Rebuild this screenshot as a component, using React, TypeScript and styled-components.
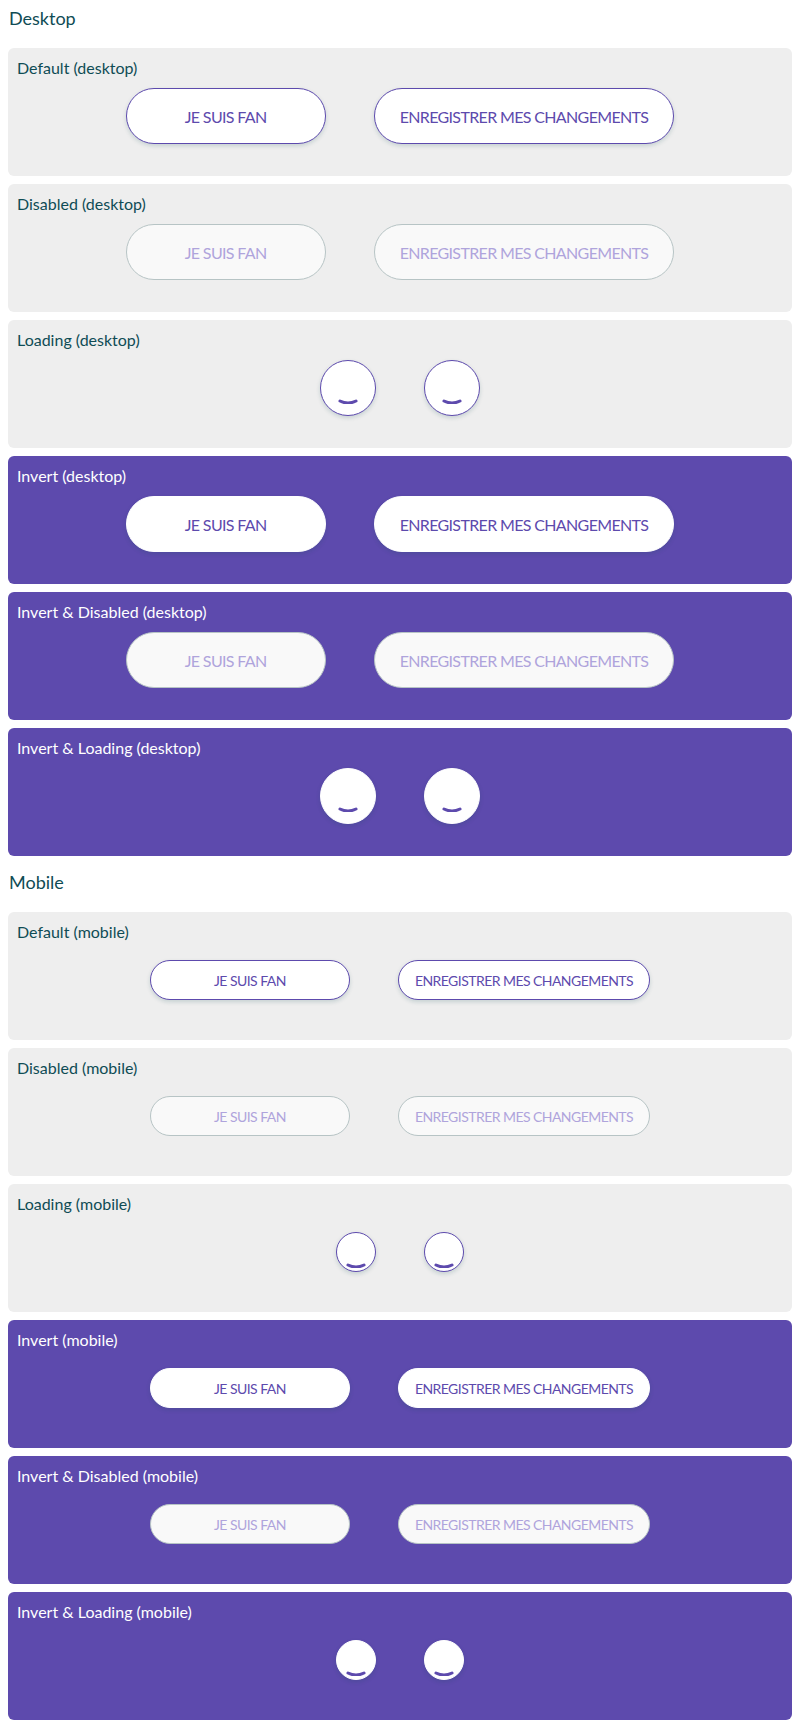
import * as React from "react";
import styled, { createGlobalStyle, css } from "styled-components";

const PURPLE = "#5d4aad";
const INK = "#0f4c55";

const GlobalStyle = createGlobalStyle`
  html, body {
    margin: 0;
    padding: 0;
    background: #ffffff;
  }
  body {
    font-family: Lato, "Noto Sans", "DejaVu Sans", sans-serif;
    -webkit-font-smoothing: antialiased;
  }
`;

type Size = "desktop" | "mobile";
type State = "default" | "disabled" | "loading";

const Page = styled.div`
  display: flex;
  flex-direction: column;
  gap: 8px;
  padding: 0 8px 8px;
`;

const SectionTitle = styled.h2`
  margin: 0;
  height: 40px;
  padding: 4px 1px 0;
  box-sizing: border-box;
  font-size: 18px;
  font-weight: 400;
  line-height: 28px;
  color: ${INK};
`;

const Card = styled.section<{ $invert: boolean }>`
  display: flex;
  flex-direction: column;
  height: 128px;
  box-sizing: border-box;
  padding: 8px 9px;
  border-radius: 6px;
  background: ${(p) => (p.$invert ? PURPLE : "#eeeeee")};
`;

const CardTitle = styled.div<{ $invert: boolean }>`
  font-size: 16px;
  line-height: 24px;
  color: ${(p) => (p.$invert ? "#ffffff" : INK)};
`;

const Row = styled.div`
  display: flex;
  align-items: center;
  justify-content: center;
  gap: 48px;
  height: 72px;
`;

const Button = styled.button<{ $size: Size; $invert: boolean; $round?: boolean }>`
  display: inline-flex;
  align-items: center;
  justify-content: center;
  box-sizing: border-box;
  margin: 0;
  font-family: inherit;
  font-weight: 400;
  text-transform: uppercase;
  white-space: nowrap;
  border-radius: 999px;
  cursor: pointer;
  background: #ffffff;
  color: ${PURPLE};
  border: 1px solid ${(p) => (p.$invert ? "#ffffff" : PURPLE)};
  box-shadow: 0 2px 4px rgba(15, 76, 85, 0.18);

  ${(p) =>
    p.$size === "desktop"
      ? css`
          height: 56px;
          min-width: 200px;
          padding: 0 25px;
          font-size: 16px;
          letter-spacing: -0.65px;
        `
      : css`
          height: 40px;
          min-width: 200px;
          padding: 0 16px;
          font-size: 14px;
          letter-spacing: -0.55px;
        `}

  ${(p) =>
    p.$round &&
    css`
      width: ${p.$size === "desktop" ? "56px" : "40px"};
      min-width: 0;
      padding: 0;
    `}

  &:disabled {
    cursor: default;
    background: #f9f9f9;
    border-color: #b7c4c5;
    color: #afa4dc;
    box-shadow: none;
  }
`;

const SpinnerSvg = styled.svg`
  display: block;
  flex: none;
`;

const Spinner = () => (
  <SpinnerSvg width="32" height="32" viewBox="-16 -16 32 32" aria-hidden="true">
    <path
      d="M -8 13 Q 0 17 8 13"
      fill="none"
      stroke={PURPLE}
      strokeWidth="3"
      strokeLinecap="round"
    />
  </SpinnerSvg>
);

const LABELS = ["Je suis fan", "Enregistrer mes changements"];

const TITLES: Record<State, string> = {
  default: "Default",
  disabled: "Disabled",
  loading: "Loading",
};

const Demo = ({
  size,
  state,
  invert,
}: {
  size: Size;
  state: State;
  invert: boolean;
}) => {
  const base = TITLES[state];
  const title = invert
    ? state === "default"
      ? "Invert"
      : `Invert & ${base}`
    : base;

  return (
    <Card $invert={invert}>
      <CardTitle $invert={invert}>
        {title} ({size})
      </CardTitle>
      <Row>
        {LABELS.map((label) =>
          state === "loading" ? (
            <Button key={label} $size={size} $invert={invert} $round aria-label={label}>
              <Spinner />
            </Button>
          ) : (
            <Button
              key={label}
              $size={size}
              $invert={invert}
              disabled={state === "disabled"}
            >
              {label}
            </Button>
          )
        )}
      </Row>
    </Card>
  );
};

const STATES: State[] = ["default", "disabled", "loading"];

const Section = ({ size, label }: { size: Size; label: string }) => (
  <React.Fragment>
    <SectionTitle>{label}</SectionTitle>
    {[false, true].map((invert) =>
      STATES.map((state) => (
        <Demo key={`${invert}-${state}`} size={size} state={state} invert={invert} />
      ))
    )}
  </React.Fragment>
);

export default function App() {
  return (
    <React.Fragment>
      <GlobalStyle />
      <Page>
        <Section size="desktop" label="Desktop" />
        <Section size="mobile" label="Mobile" />
      </Page>
    </React.Fragment>
  );
}
